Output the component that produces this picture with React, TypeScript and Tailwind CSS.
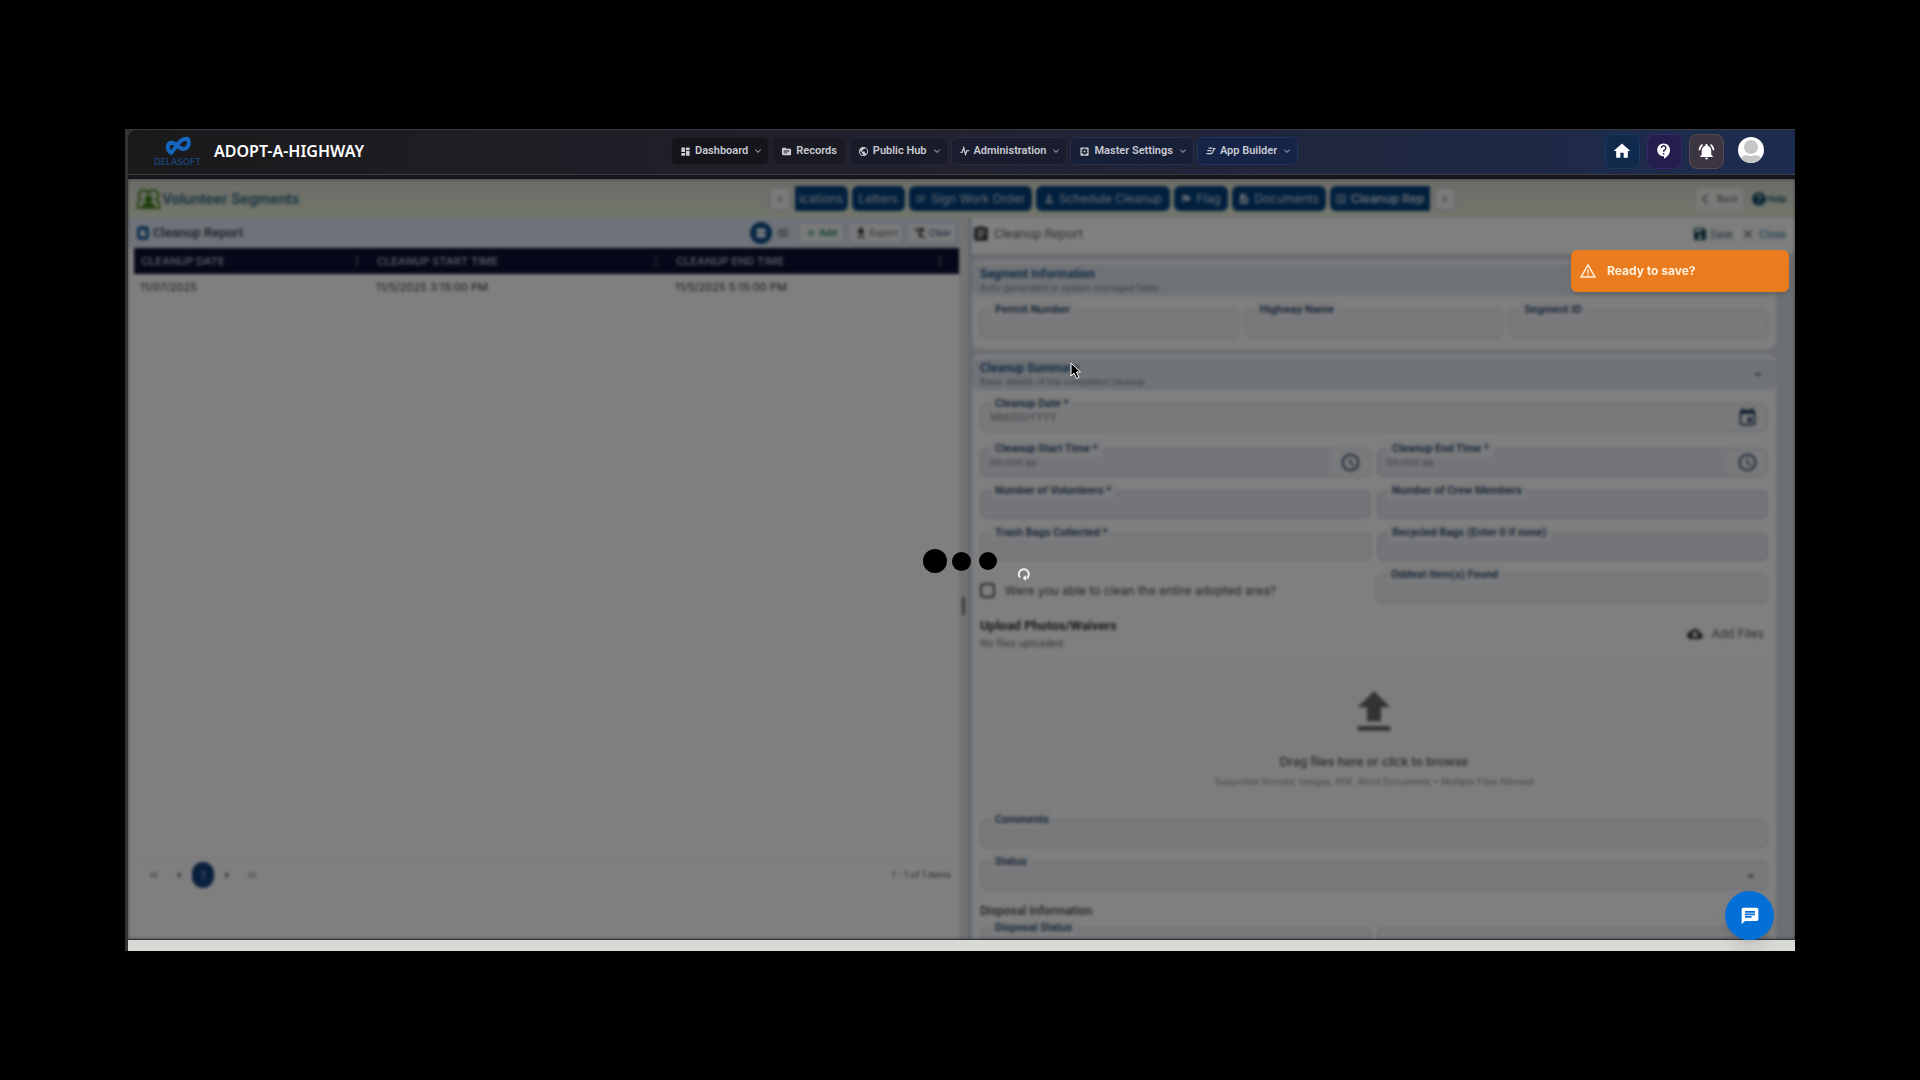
import React from 'react'
import {
  MdAccessTime,
  MdAdd,
  MdArrowDropDown,
  MdArrowDropUp,
  MdArrowLeft,
  MdArrowRight,
  MdAssignment,
  MdChat,
  MdClose,
  MdCloudUpload,
  MdContactSupport,
  MdDashboard,
  MdDescription,
  MdEvent,
  MdFileDownload,
  MdFilterAltOff,
  MdFirstPage,
  MdFlag,
  MdHelp,
  MdHome,
  MdInsertDriveFile,
  MdKeyboardArrowDown,
  MdLastPage,
  MdListAlt,
  MdMenu,
  MdMoreVert,
  MdNotificationsActive,
  MdPerson,
  MdPublic,
  MdSave,
  MdSettingsApplications,
  MdSource,
  MdUpload,
  MdWarningAmber,
  MdArrowBackIosNew,
  MdNotes,
  MdViewAgenda,
} from 'react-icons/md'

const PulseIcon = () => (
  <svg viewBox="0 0 24 24" className="size-[10px]" fill="none" stroke="currentColor" strokeWidth="3">
    <path d="M1 15h4L9 4l4 16 4-9h5" />
  </svg>
)

const BuilderIcon = () => (
  <svg viewBox="0 0 24 24" className="size-[10px]" fill="none" stroke="currentColor" strokeWidth="3">
    <path d="M6 5h10M3 11h10M1 18h13M14 18l6-12M17 6h6" />
  </svg>
)

const menu = [
  { name: 'Dashboard', icon: <MdDashboard className="size-[11px]" />, arrow: true, style: 'bg-[#14141a] border-[#1d1d22]' },
  { name: 'Records', icon: <MdSource className="size-[11px]" />, arrow: false, style: 'bg-[#191a22] border-[#22232c]' },
  { name: 'Public Hub', icon: <MdPublic className="size-[11px]" />, arrow: true, style: 'bg-[#191b28] border-[#242634]' },
  { name: 'Administration', icon: <PulseIcon />, arrow: true, style: 'bg-[#1a1d2e] border-[#282b3d]' },
  { name: 'Master Settings', icon: <MdSettingsApplications className="size-[11px]" />, arrow: true, style: 'bg-[#182038] border-[#26304a]' },
  { name: 'App Builder', icon: <BuilderIcon />, arrow: true, style: 'bg-[#162448] border-[#203460]' },
]

const TopBar = () => (
  <header className="flex h-[46px] shrink-0 items-center justify-between rounded-tl-lg border-t border-b border-[#3a3a42] bg-linear-to-r from-[#1a1a1b] via-[#222230] to-[#1c2c50] pr-[31px] pb-[2px] pl-[27px]">
    <div className="flex items-center gap-[14px]">
      <div className="flex w-[45px] flex-col items-center">
        <svg viewBox="0 0 26 20" className="h-5 w-[26px]" fill="none" stroke="#1666c0" strokeWidth="4" strokeLinejoin="round">
          <path d="M6 17C1 13 2 6 8 7c4 1 6 6 10 6 5 0 7-5 5-10-5-1-8 2-11 6-2 3-4 6-6 8z" />
        </svg>
        <span className="text-[9px] leading-[11px] text-[#17508c]">DELASOFT</span>
      </div>
      <h1 className="font-['Noto_Sans',sans-serif] text-[16px] font-semibold text-white">ADOPT-A-HIGHWAY</h1>
    </div>
    <nav className="flex gap-[3px]">
      {menu.map((m) => (
        <button
          key={m.name}
          className={`flex h-7 items-center gap-1 rounded-md border pl-2 font-[Roboto,sans-serif] text-[11px] font-semibold text-[#c9cad2] ${m.arrow ? 'pr-1' : 'pr-2'} ${m.style}`}
        >
          {m.icon}
          {m.name}
          {m.arrow && <MdKeyboardArrowDown className="size-3 text-[#8f909c]" />}
        </button>
      ))}
    </nav>
    <div className="flex items-center gap-[7px] text-white">
      <button aria-label="Home" className="flex size-[35px] items-center justify-center rounded-lg border border-[#173a60] bg-[#102a4c]">
        <MdHome className="size-5" />
      </button>
      <button aria-label="Support" className="flex size-[35px] items-center justify-center rounded-lg border border-[#38286a] bg-[#241e4c]">
        <MdContactSupport className="size-[18px]" />
      </button>
      <button aria-label="Notifications" className="flex size-[35px] items-center justify-center rounded-lg border border-[#5a4a52] bg-[#3c3642]">
        <MdNotificationsActive className="size-[19px]" />
      </button>
      <button aria-label="Account" className="mb-[3px] ml-[7px] size-[26px] overflow-hidden rounded-full bg-white">
        <svg viewBox="0 0 26 26" fill="#c6c6c6">
          <circle cx="13" cy="10" r="7" />
          <path d="M3 26c0-9 4-8 10-7 6-1 10-2 10 7z" />
        </svg>
      </button>
    </div>
  </header>
)

const tab = 'flex h-[25px] items-center justify-center gap-1 rounded-md bg-[#03407c] whitespace-nowrap text-[12px] text-[#c8d4e0]'
const tabArrow = 'flex h-6 w-[22px] items-center justify-center rounded-md border border-[#b8b8c0] bg-[#f4f4f4] text-[#888]'

const TitleBar = () => (
  <div className="flex h-[39px] shrink-0 items-center justify-between bg-linear-to-b from-[#d8d8ce] to-[#e4eed8] pr-[8px] pl-[7px]">
    <div className="flex w-[620px] items-center">
      <svg viewBox="0 0 28 22" className="h-[22px] w-[27px]" fill="none" stroke="#3c7a10" strokeWidth="2">
        <path d="M1 20h7M20 20h7M3 18c-1-4 1-5 3-6-4-4-2-10 3-10 2 0 4 1 5 3 1-2 3-3 5-3 5 0 7 6 3 10 2 1 4 2 3 6" />
        <circle cx="14" cy="11" r="3" fill="#3c7a10" />
        <path d="M8 20c0-6 12-6 12 0z" fill="#3c7a10" />
      </svg>
      <h2 className="text-[14px] font-semibold text-[#2c6480]">Volunteer Segments</h2>
    </div>
    <div className="flex items-center gap-1">
      <button aria-label="Previous tabs" className={tabArrow}>
        <MdArrowLeft />
      </button>
      <button className={`${tab} w-[53px] rounded-l-none`}>ications</button>
      <button className={`${tab} w-[53px]`}>Letters</button>
      <button className={`${tab} w-[123px]`}><MdNotes />Sign Work Order</button>
      <button className={`${tab} w-[134px]`}><MdPerson />Schedule Cleanup</button>
      <button className={`${tab} w-[54px]`}><MdFlag />Flag</button>
      <button className={`${tab} w-[94px]`}><MdDescription />Documents</button>
      <button className={`${tab} h-[22px] w-[100px] rounded-r-none font-semibold`}><MdListAlt />Cleanup Rep</button>
      <button aria-label="Next tabs" className={tabArrow}>
        <MdArrowRight />
      </button>
    </div>
    <div className="flex w-[318px] items-center justify-end gap-2 text-[9px]">
      <button className="flex h-[22px] w-[46px] items-center gap-[6px] rounded bg-[#f2f4f0] pl-[2px] text-[#555]">
        <MdArrowBackIosNew className="size-3 shrink-0" />
        Back
      </button>
      <button className="flex items-center font-semibold text-[#0d4a66]">
        <MdHelp className="size-4" />
        Help
      </button>
    </div>
  </div>
)

const columns = [
  { name: 'CLEANUP DATE', value: '11/07/2025', width: 'w-[236px]' },
  { name: 'CLEANUP START TIME', value: '11/5/2025 3:15:00 PM', width: 'w-[299px]' },
  { name: 'CLEANUP END TIME', value: '11/5/2025 5:15:00 PM', width: '' },
]

const smallButton = 'flex h-[22px] items-center justify-center gap-[2px] rounded border border-[#c4c9d2] bg-[#f2f5f8] text-[9px]'

const ReportList = () => (
  <section className="flex min-w-0 flex-col bg-white">
    <div className="flex h-[30px] shrink-0 items-center justify-between bg-[#dee7f2] pr-[2px] pl-[9px]">
      <h3 className="flex items-center gap-1 font-[Roboto,sans-serif] text-[13px] font-semibold text-[#3a4656]">
        <span className="flex h-[14px] w-3 items-center justify-center rounded-sm bg-[#1c62a0] text-white">
          <MdInsertDriveFile className="size-2" />
        </span>
        Cleanup Report
      </h3>
      <div className="flex items-center gap-1">
        <button aria-label="Card view" className="flex size-[22px] items-center justify-center rounded-full bg-[#0b4c88] text-white">
          <MdViewAgenda className="size-3" />
        </button>
        <button aria-label="List view" className="mr-1 text-[#555]">
          <MdMenu className="size-[14px]" />
        </button>
        <button className={`${smallButton} w-[46px] font-semibold text-[#107840]`}><MdAdd className="size-3" />Add</button>
        <button className={`${smallButton} w-[55px] text-[#555]`}><MdFileDownload className="size-[14px] text-[#222]" />Export</button>
        <button className={`${smallButton} w-[50px] text-[#1c3c66]`}><MdFilterAltOff className="size-[14px] text-[#333]" />Clear</button>
      </div>
    </div>
    <div className="flex-1 pl-[6px]">
      <table className="w-full table-fixed text-left">
        <thead className="bg-[#0a1030] text-[11px] text-[#a8aec0]">
          <tr className="h-[26px]">
            {columns.map((c) => (
              <th key={c.name} className={`pl-[7px] font-semibold last:pr-[6px] ${c.width}`}>
                <div className="flex items-center justify-between pr-[6px]">
                  {c.name}
                  <MdMoreVert className="size-[14px] opacity-60" />
                </div>
              </th>
            ))}
          </tr>
        </thead>
        <tbody>
          <tr className="h-[26px] text-[11px] text-[#333]">
            {columns.map((c) => (
              <td key={c.name} className="pl-[6px]">{c.value}</td>
            ))}
          </tr>
        </tbody>
      </table>
    </div>
    <div className="mb-[47px] flex h-[35px] items-center justify-between border-t border-[#f4f4f4] pr-2 pl-5 text-[#555]">
      <div className="flex items-center gap-[11px]">
        <button aria-label="First page"><MdFirstPage className="size-3" /></button>
        <button aria-label="Previous page"><MdArrowLeft className="size-4" /></button>
        <button className="-mx-[6px] h-[26px] w-[22px] rounded-full bg-[#12407a] text-[10px] text-[#c0d0e8]">1</button>
        <button aria-label="Next page"><MdArrowRight className="size-4" /></button>
        <button aria-label="Last page"><MdLastPage className="size-3" /></button>
      </div>
      <span className="text-[9px]">1 - 1 of 1 items</span>
    </div>
  </section>
)

type FieldProps = {
  label: string
  placeholder?: string
  tint?: boolean
  icon?: React.ReactNode
}

const fieldLabel = 'absolute -top-2 left-[10px] bg-[#f6f7fa] px-1 font-[Roboto,sans-serif] text-[11px] leading-4 font-semibold text-[#2f506e]'

const Field = ({ label, placeholder, tint, icon }: FieldProps) => {
  const id = React.useId()
  return (
    <div className={`relative flex h-[29px] min-w-0 flex-1 items-center rounded-md border border-[#d0d5e0] ${tint ? 'bg-[#e8eaf2]' : 'bg-[#f1f2f7]'}`}>
      <label htmlFor={id} className={fieldLabel}>
        {label}
      </label>
      <input id={id} placeholder={placeholder} className="w-full min-w-0 bg-transparent px-[9px] text-[10px] outline-none placeholder:text-[#84848c]" />
      {icon && <span className="flex h-full w-10 shrink-0 items-center justify-center bg-[#f3f4f7] text-[#244060]">{icon}</span>}
    </div>
  )
}

const CardHeader = ({ title, text, arrow }: { title: string; text: string; arrow?: boolean }) => (
  <div className="flex h-8 items-center justify-between rounded-lg bg-[#dfe6ee] pr-[10px] pl-2">
    <div>
      <h4 className="font-[Roboto,sans-serif] text-[12px] leading-[15px] font-bold text-[#265484]">{title}</h4>
      <p className="text-[9px] leading-[11px] text-[#78808c]">{text}</p>
    </div>
    {arrow && <MdArrowDropUp className="size-4 text-[#555]" />}
  </div>
)

const ReportForm = () => (
  <section className="flex min-w-0 flex-col border-l-4 border-[#c8d4e0] bg-[#d9dee6]">
    <div className="flex h-[37px] shrink-0 items-start justify-between border-b border-[#c8ccd4] bg-white pt-[6px] pr-[9px]">
      <h3 className="flex items-center gap-1 font-[Roboto,sans-serif] text-[13px] text-[#666]">
        <MdAssignment className="size-[18px] text-[#333]" />
        Cleanup Report
      </h3>
      <div className="flex gap-2 text-[10px]">
        <button className="flex h-5 items-center gap-[2px] bg-[#f8f8f8] text-[#3c5a66]">
          <MdSave className="size-4 text-[#0c4452]" />
          Save
        </button>
        <button className="flex h-5 items-center gap-1 bg-[#f8f8f8] text-[#1a6a94]">
          <MdClose className="size-[14px] text-[#445]" />
          Close
        </button>
      </div>
    </div>
    <div className="min-h-0 flex-1 overflow-hidden pt-[6px] pr-[19px]">
      <div className="rounded-lg bg-[#fcfcfc] pt-[3px] pb-[11px]">
        <CardHeader title="Segment Information" text="Auto-generated or system managed fields" />
        <div className="mt-[13px] flex gap-[6px] px-2">
          <Field label="Permit Number" />
          <Field label="Highway Name" />
          <Field label="Segment ID" />
        </div>
      </div>
      <div className="mt-[6px] rounded-lg bg-white pt-[3px]">
        <CardHeader title="Cleanup Summary" text="Basic details of the completed cleanup" arrow />
        <form className="mt-[13px] flex flex-col px-2">
          <div className="flex">
            <Field label="Cleanup Date *" placeholder="MM/DD/YYYY" icon={<MdEvent className="size-[21px]" />} />
          </div>
          <div className="mt-4 flex gap-[6px]">
            <Field label="Cleanup Start Time *" placeholder="hh:mm aa" tint icon={<MdAccessTime className="size-[21px]" />} />
            <Field label="Cleanup End Time *" placeholder="hh:mm aa" tint icon={<MdAccessTime className="size-[21px]" />} />
          </div>
          <div className="mt-[13px] flex gap-[6px]">
            <Field label="Number of Volunteers *" tint />
            <Field label="Number of Crew Members" tint />
          </div>
          <div className="mt-[13px] flex gap-[6px]">
            <Field label="Trash Bags Collected *" />
            <Field label="Recycled Bags (Enter 0 if none)" tint />
          </div>
          <div className="mt-[13px] flex gap-[6px]">
            <label className="flex flex-1 items-center gap-[10px] pt-1 text-[12px] text-[#444]">
              <input type="checkbox" className="size-[15px] appearance-none rounded-sm border-2 border-[#555]" />
              Were you able to clean the entire adopted area?
            </label>
            <Field label="Oddest Item(s) Found" />
          </div>
          <div className="mt-[14px] flex items-center justify-between">
            <div>
              <h4 className="font-[Roboto,sans-serif] text-[13px] leading-[18px] font-bold text-[#333]">Upload Photos/Waivers</h4>
              <p className="text-[10px] leading-4 text-[#666]">No files uploaded</p>
            </div>
            <button type="button" className="flex items-center gap-2 pr-1 text-[12px] text-[#555]">
              <MdCloudUpload className="size-4 text-[#444]" />
              Add Files
            </button>
          </div>
          <button type="button" className="mt-[10px] flex h-[150px] flex-col items-center rounded border border-dashed border-[#f0f0f0] bg-[#fbfbfb] pt-[22px]">
            <MdUpload className="size-[56px] text-[#666]" />
            <span className="mt-3 text-[12px] leading-5 font-medium text-[#4c4c4c]">Drag files here or click to browse</span>
            <span className="mt-[2px] text-[9px] leading-4 text-[#8c8c8c]">
              Supported formats: Images, PDF, Word Documents • Multiple Files Allowed
            </span>
          </button>
          <div className="mt-[8px] flex">
            <Field label="Comments" />
          </div>
          <div className="relative mt-[13px] flex h-[29px] items-center rounded-md border border-[#d0d5e0] bg-[#f1f2f7]">
            <label htmlFor="status" className={fieldLabel}>
              Status
            </label>
            <select id="status" className="size-full appearance-none bg-transparent" />
            <MdArrowDropDown className="mr-2 size-4 shrink-0 text-[#555]" />
          </div>
          <h4 className="mt-[12px] font-[Roboto,sans-serif] text-[12px] leading-[18px] font-medium text-[#444]">Disposal Information</h4>
          <div className="mt-[7px] flex gap-[6px]">
            <Field label="Disposal Status" />
            <Field label="" />
          </div>
        </form>
      </div>
    </div>
  </section>
)

const App = () => {
  return (
    <div className="flex h-screen bg-black px-[125px] py-[129px] font-[Inter,sans-serif]">
      <div className="relative flex min-w-0 flex-1 flex-col bg-[#333436] pl-[3px]">
        <TopBar />
        <div className="h-1 shrink-0 bg-[#16161b]" />
        <div className="relative flex min-h-0 flex-1 flex-col overflow-hidden border-b border-[#2a3644]">
          <div className="flex min-h-0 flex-1 flex-col blur-[1px]">
            <TitleBar />
            <main className="grid min-h-0 flex-1 grid-cols-[831fr_9px_827fr] grid-rows-[minmax(0,1fr)]">
              <ReportList />
              <div className="flex items-center justify-center bg-[#e6e4e4] pt-[54px]">
                <div className="h-[18px] w-[3px] bg-[#777]" />
              </div>
              <ReportForm />
            </main>
          </div>
          <div className="absolute inset-0 bg-black/50 backdrop-blur-[1px]" />
        </div>
        <div className="h-[11px] shrink-0 bg-[#d8d8d5]" />

        <div role="alert" className="absolute top-[121px] right-[6px] flex h-[42px] w-[218px] items-center gap-[10px] rounded-md bg-[#ea7c1f] pl-[8px] text-[12px] font-bold text-[#fff0dc] shadow-md">
          <MdWarningAmber className="size-[18px]" />
          Ready to save?
        </div>
        <button aria-label="Open chat" className="absolute right-[21px] bottom-[11px] flex size-[49px] items-center justify-center rounded-full bg-[#046fd6] text-white shadow-lg">
          <MdChat className="size-5" />
        </button>
        {/* loading dots */}
        <div className="absolute top-[420px] left-[798px] flex items-center text-black">
          <span className="size-6 rounded-full bg-black" />
          <span className="ml-[5px] size-[19px] rounded-full bg-black" />
          <span className="ml-2 size-[18px] rounded-full bg-black" />
        </div>
        <svg viewBox="0 0 14 14" className="absolute top-[438px] left-[892px] size-[14px]" fill="none" stroke="#eee" strokeWidth="2">
          <path d="M3 10.500A5 5 0 1 1 9.500 11.500" />
          <path d="M9 8L5.500 11l3.500 3z" fill="#eee" stroke="none" />
        </svg>
        <svg viewBox="0 0 12 18" className="absolute top-[233px] left-[945px] h-[18px] w-3">
          <path d="M1 1v13l3-3 2.500 5.500 2.500-1-2.500-5.500h4z" fill="#000" stroke="#fff" strokeWidth="1" />
        </svg>
      </div>
    </div>
  )
}

export default App
